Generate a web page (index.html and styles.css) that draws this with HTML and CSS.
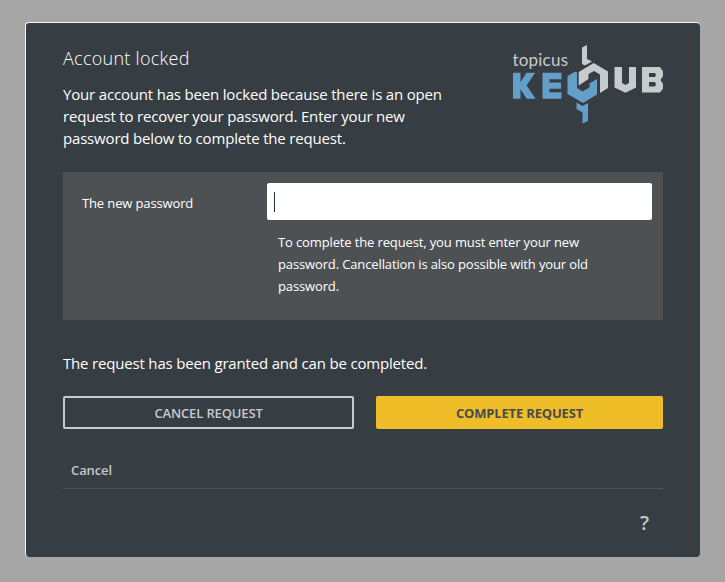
FILE: index.html
```html
<!DOCTYPE html>
<html lang="en">
<head>
<meta charset="utf-8">
<title>Account locked</title>
<link rel="stylesheet" href="styles.css">
</head>
<body>
<main class="panel">
  <header class="header">
    <div class="intro">
      <h1>Account locked</h1>
      <p>Your account has been locked because there is an open request to recover your password. Enter your new password below to complete the request.</p>
    </div>
    <svg class="logo" viewBox="513 44 150 80" role="img" aria-label="topicus KeyHub">
      <text class="logo-name" x="512.5" y="66" textLength="55.500">topicus</text>
      <g class="blue">
        <path d="M513 72.700h7.500v9.500l6-9.500h8.700l-8.700 12.800 9.200 13.200h-9l-6.200-9.500v9.500h-7.500z"/>
        <path d="M542.500 72.700h19v6.500h-12v3.300h11.500v6.300h-11.500v3.500h12v6.400h-19z"/>
        <path d="M567.500 76l8-4.500 1.500 1v15.500l5.500 3.500 7-4v-4l7.500-4.500v15.500l-14 8.500-15.500-9z"/>
        <path d="M576.500 102.500l6 3.500 5.500-3v18l-5.500 2.500v-11l-6-3.500z"/>
      </g>
      <g class="grey">
        <path d="M582 47.500l5-2.500v14l5 2.500-7 4-3-1.500z"/>
        <path d="M578.700 72l15-9 14.300 8.500v16.500l-8 5v-18.500l-6-3.500-5.500 3v5l-9.800 6.500z"/>
        <path d="M614.500 67h7.500v16l3.500 2 3.500-2v-16h7v20.500l-10.500 5.300-11-5.300z"/>
        <path fill-rule="evenodd" d="M642 67h18l3 4.500v4.500l-2.500 4 2.500 4v4.500l-3 4h-18zm7 6v4h6l1-2-1-2zm0 9v4.500h6l1-2.200-1-2.300z"/>
      </g>
    </svg>
  </header>
  <form>
    <div class="field">
      <label for="pw">The new password</label>
      <div class="control">
        <input id="pw" type="password">
        <span class="caret"></span>
        <p>To complete the request, you must enter your new password. Cancellation is also possible with your old password.</p>
      </div>
    </div>
    <p class="status">The request has been granted and can be completed.</p>
    <div class="actions">
      <button class="secondary" type="button">CANCEL REQUEST</button>
      <button class="primary" type="button">COMPLETE REQUEST</button>
    </div>
  </form>
  <nav class="links"><a>Cancel</a></nav>
  <footer class="help"><a>?</a></footer>
</main>
</body>
</html>
```

FILE: styles.css
```css
* { box-sizing: border-box; }
body {
  margin: 0;
  height: 582px;
  padding: 22px 25px 25px;
  background: #a6a6a6;
  color: #fff;
  font-family: "Open Sans", sans-serif;
  overflow: hidden;
}
h1, p { margin: 0; }
.panel {
  height: 535px;
  padding: 22px 37px 0;
  background: #363d43;
  border-radius: 4px;
  border-top: 1px solid #f4f4f4;
  border-left: 1px solid #f4f4f4;
}
.header { display: flex; justify-content: space-between; height: 127px; }
.intro { width: 390px; }
h1 { font-size: 18px; font-weight: 300; line-height: 26px; margin-bottom: 12px; letter-spacing: 0.27px; }
.intro p { font-size: 15px; line-height: 22px; letter-spacing: -0.18px; }
.logo { width: 150px; height: 80px; margin-top: -1px; }
.logo-name { font: 17px Lato, sans-serif; fill: #c6cbce; }
.blue { fill: #639fc6; }
.grey { fill: #c6cbce; }
.field {
  display: grid;
  grid-template-columns: 204px 385px;
  height: 148px;
  padding-top: 11px;
  background: #4d5154;
  font-size: 13px;
  letter-spacing: -0.13px;
}
.field label { padding: 11px 0 0 19px; line-height: 18px; }
.control { position: relative; }
.field input {
  display: block;
  width: 385px;
  height: 37px;
  padding: 0 7px;
  border: 0;
  border-radius: 2px;
  outline: 0;
  background: #fff;
  color: #373d43;
  font: 15px "Open Sans", sans-serif;
}
.caret { position: absolute; left: 7px; top: 9px; width: 1px; height: 20px; background: #262f36; }
.control p { width: 330px; margin: 11px 0 0 11px; line-height: 22px; }
.status { margin-top: 32px; font-size: 15px; line-height: 22px; letter-spacing: -0.18px; }
.actions { display: grid; grid-template-columns: 291px 287px; gap: 22px; margin-top: 22px; }
button { height: 33px; padding: 0; border-radius: 2px; font: 600 13px "Open Sans", sans-serif; letter-spacing: -0.14px; }
.secondary { border: 2px solid #c6cbce; background: transparent; color: #c6cbce; font-weight: 600; }
.primary { border: 0; background: #efbd27; color: #454c50; font-weight: 700; letter-spacing: -0.18px; }
.links {
  height: 60px;
  padding: 30px 8px 0;
  border-bottom: 1px solid #505457;
  color: #c6c8ca;
  font-size: 13px;
  font-weight: 600;
  line-height: 22px;
  letter-spacing: -0.1px;
}
.help { padding: 20px 14px 0; text-align: right; color: #c6c8ca; font-size: 20px; font-weight: 600; line-height: 28px; }
```
